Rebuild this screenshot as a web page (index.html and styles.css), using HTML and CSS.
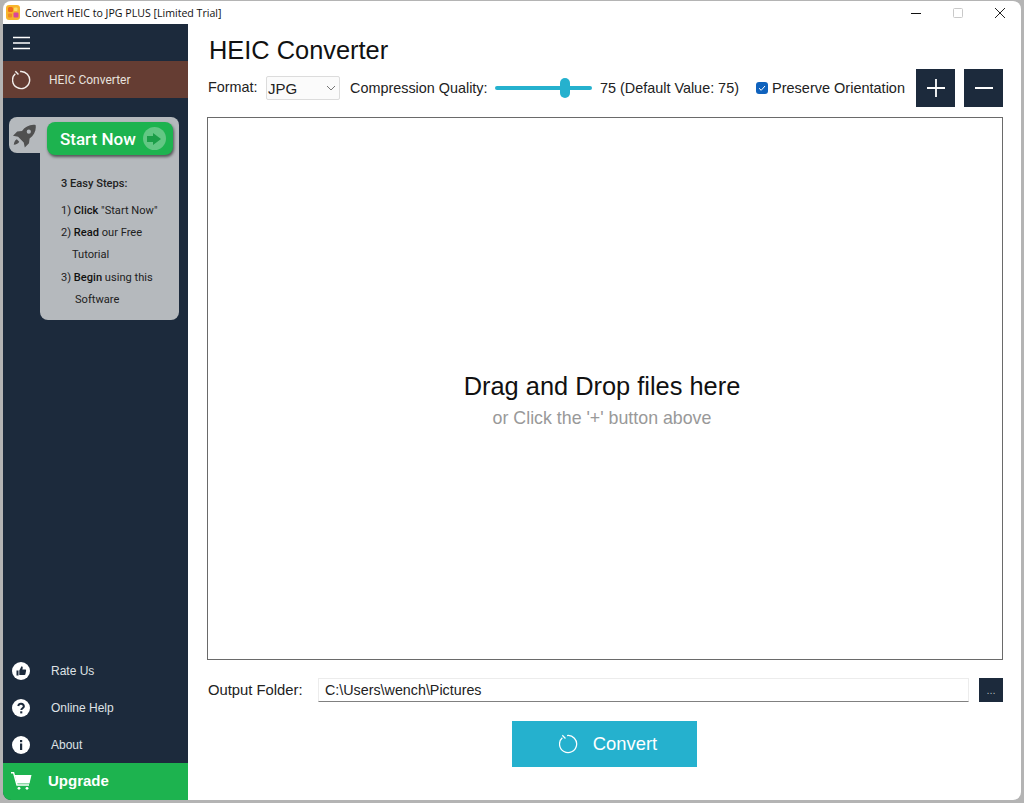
FILE: index.html
```html
<!DOCTYPE html>
<html lang="en">
<head>
    <meta charset="UTF-8">
    <title>Convert HEIC to JPG PLUS [Limited Trial]</title>
    <link rel="stylesheet" href="styles.css">
</head>
<body>
    <div class="window">
        <div class="titleBar">
            <svg class="appIcon" viewBox="0 0 14 15">
                <rect width="14" height="15" rx="3" fill="#f7b52c"/>
                <rect x="2" y="2" width="5" height="5" rx="1.500" fill="#ee6a1f"/>
                <rect x="7.500" y="7.500" width="5" height="5" rx="1" fill="#d9459c"/>
                <rect x="2" y="8.500" width="4" height="4" rx="1" fill="#f08a24"/>
                <rect x="8" y="2.500" width="3.500" height="3.500" rx="1" fill="#fbdc6a"/>
            </svg>
            <span class="titleText">Convert HEIC to JPG PLUS [Limited Trial]</span>
            <div class="windowBtns">
                <svg viewBox="0 0 42 24"><path d="M16 12.500h10" stroke="#111" fill="none"/></svg>
                <svg viewBox="0 0 42 24"><rect x="16.500" y="7.500" width="9" height="9" rx="1" stroke="#c9c9c9" fill="none"/></svg>
                <svg viewBox="0 0 42 24"><path d="M16 7l10 10M26 7L16 17" stroke="#222" fill="none"/></svg>
            </div>
        </div>
        <div class="appBody">
            <div class="sidebar">
                <div class="menuBtn">
                    <svg class="hamburger" viewBox="0 0 17 14"><path d="M0 1.500h17M0 7h17M0 12.500h17" stroke="#fff" stroke-width="1.600" fill="none"/></svg>
                </div>
                <div class="navActive">
                    <svg class="refreshIcon" viewBox="0 0 20 20"><path d="M8.500 1.100A9 9 0 1 1 3.500 3.400M3.500 .8 6.800 4.200" stroke="#f2eeea" stroke-width="1.500" fill="none"/></svg>
                    <span>HEIC Converter</span>
                </div>

                <div class="promo">
                    <div class="promoTop">
                        <svg class="rocket" viewBox="0 0 24 24"><path fill="#505050" d="M23.600.4c-6-.8-10.800 1.700-14.200 6.300l-5 .6L0 11.700l5.300 1.100 5.900 5.900 1.100 5.300 4.400-4.400.6-5C22 11.200 24.500 6.400 23.600.4zM16.500 9.700a2.200 2.200 0 1 1 0-4.400 2.200 2.200 0 0 1 0 4.400zM4 15.500c-1.800 1-2.800 2.800-3.200 5.700 2.900-.4 4.700-1.400 5.700-3.200z"/></svg>
                        <div class="startBtn">
                            <span>Start Now</span>
                            <span class="startArrow"><svg viewBox="0 0 14 12"><path d="M0 3h6V0l8 6-8 6V9H0z" fill="#1b9e48"/></svg></span>
                        </div>
                    </div>
                    <div class="promoBody">
                        <p class="stepsTitle">3 Easy Steps:</p>
                        <p>1) <b>Click</b> "Start Now"</p>
                        <p>2) <b>Read</b> our Free</p>
                        <p class="indent1">Tutorial</p>
                        <p>3) <b>Begin</b> using this</p>
                        <p class="indent2">Software</p>
                    </div>
                </div>

                <div class="sideBottom">
                    <div class="navItem">
                        <svg class="navIcon" viewBox="0 0 18 18"><circle cx="9" cy="9" r="9" fill="#fff"/><path fill="#1c2a3c" d="M4.500 8.500h2v5h-2zM7.300 8.500 9.500 4.300c1 0 1.400.8 1.200 1.700l-.3 1.500h2.800c.6 0 1 .5.900 1.100l-.7 3.600c-.1.500-.5.800-1 .8H7.300z"/></svg>
                        <span>Rate Us</span>
                    </div>
                    <div class="navItem">
                        <svg class="navIcon" viewBox="0 0 18 18"><circle cx="9" cy="9" r="9" fill="#fff"/><path d="M6.200 7a2.900 2.900 0 0 1 5.700.3c0 1.900-2.600 2-2.600 3.700" stroke="#1c2a3c" stroke-width="2" fill="none"/><rect x="8.200" y="12.300" width="2.100" height="2.100" fill="#1c2a3c"/></svg>
                        <span>Online Help</span>
                    </div>
                    <div class="navItem">
                        <svg class="navIcon" viewBox="0 0 18 18"><circle cx="9" cy="9" r="9" fill="#fff"/><rect x="8" y="4" width="2.200" height="2.200" fill="#1c2a3c"/><rect x="8" y="7.500" width="2.200" height="6.500" fill="#1c2a3c"/></svg>
                        <span>About</span>
                    </div>
                    <div class="upgrade">
                        <svg class="cartIcon" viewBox="0 0 21 18"><path d="M0 .7h2.600L6 13h12" stroke="#fff" stroke-width="1.400" fill="none"/><path fill="#fff" d="M3.700 3H20.500L18.500 11.500H6z"/><circle cx="8" cy="16.300" r="1.400" fill="#fff"/><circle cx="16" cy="16.300" r="1.400" fill="#fff"/></svg>
                        <span>Upgrade</span>
                    </div>
                </div>
            </div>

            <div class="main">
                <h1>HEIC Converter</h1>
                <div class="toolbar">
                    <span class="formatLabel">Format:</span>
                    <div class="select">
                        <span>JPG</span>
                        <svg class="chevron" viewBox="0 0 10 6"><path d="M1 1l4 4 4-4" stroke="#777" fill="none"/></svg>
                    </div>
                    <span class="qualityLabel">Compression Quality:</span>
                    <div class="slider"><div class="sliderThumb"></div></div>
                    <span class="qualityValue">75 (Default Value: 75)</span>
                    <span class="checkbox"><svg viewBox="0 0 12 12"><path d="M3 6.200 5.200 8.300 9 4" stroke="#fff" fill="none"/></svg></span>
                    <span class="checkLabel">Preserve Orientation</span>
                    <button class="squareBtn addBtn"><svg viewBox="0 0 20 20"><path d="M10 1v18M1 10h18" stroke="#fff" stroke-width="1.800" fill="none"/></svg></button>
                    <button class="squareBtn"><svg viewBox="0 0 20 20"><path d="M1 10h18" stroke="#fff" stroke-width="1.800" fill="none"/></svg></button>
                </div>

                <div class="dropZone">
                    <div class="dropTitle">Drag and Drop files here</div>
                    <div class="dropHint">or Click the '+' button above</div>
                </div>

                <div class="outputRow">
                    <span class="outputLabel">Output Folder:</span>
                    <div class="pathBox">C:\Users\wench\Pictures</div>
                    <button class="browseBtn">...</button>
                </div>

                <button class="convertBtn">
                    <svg viewBox="0 0 20 20"><path d="M8.500 1.100A9 9 0 1 1 3.500 3.400M3.500 .8 6.800 4.200" stroke="#fff" stroke-width="1.300" fill="none"/></svg>
                    <span>Convert</span>
                </button>
            </div>
        </div>
    </div>
</body>
</html>
```

FILE: styles.css
```css
* { box-sizing: border-box; }

html, body {
  margin: 0;
  height: 100%;
}

/* Background behind the window */
body {
  background: #b4b4b4;
  padding: 1px 3px 3px 3px;
  font-family: "Liberation Sans", Arial, sans-serif;
  overflow: hidden;
}

.window {
  height: 799px;
  background: #ffffff;
  border-radius: 8px;
  overflow: hidden;
  display: flex;
  flex-direction: column;
}

/* Title bar */
.titleBar {
  height: 23px;
  display: flex;
  align-items: center;
  padding-left: 3px;
}

.appIcon {
  width: 14px;
  height: 15px;
}

.titleText {
  margin-left: 5px;
  font: 10.6px "Open Sans", sans-serif;
  color: #111111;
}

.windowBtns {
  margin-left: auto;
  display: flex;
}

.windowBtns svg {
  width: 42px;
  height: 24px;
}

.appBody {
  flex: 1;
  display: flex;
  min-height: 0;
}

/* Sidebar */
.sidebar {
  width: 185px;
  background: #1c2a3c;
  display: flex;
  flex-direction: column;
}

.menuBtn {
  height: 37px;
  display: flex;
  align-items: center;
  padding-left: 10px;
}

.hamburger {
  width: 17px;
  height: 14px;
}

.navActive {
  height: 37px;
  background: #653d33;
  display: flex;
  align-items: center;
  color: #e8e2de;
  font: 12px Roboto, sans-serif;
}

.refreshIcon {
  width: 19px;
  height: 20px;
  margin-left: 9px;
  margin-right: 18px;
}

/* Start Now card */
.promo {
  margin: 19px 0 0 6px;
  width: 170px;
  color: #222222;
  font: 11.1px Roboto, sans-serif;
}

.promoTop {
  height: 36px;
  background: #b5b9bd;
  border-radius: 8px 8px 0 8px;
  display: flex;
  padding: 5px 0 0 4px;
}

.rocket {
  width: 23px;
  height: 24px;
  margin-top: 2px;
}

.startBtn {
  width: 126px;
  height: 33px;
  margin-left: 11px;
  background: #1db34f;
  border-radius: 8px;
  box-shadow: 1px 2px 3px rgba(0, 0, 0, 0.55);
  display: flex;
  align-items: center;
  padding-left: 13px;
  color: #ffffff;
  font: 500 17px Roboto, sans-serif;
  position: relative;
}

.startArrow {
  width: 23px;
  height: 23px;
  margin-left: 7px;
  border-radius: 50%;
  background: #63c784;
  display: flex;
  align-items: center;
  justify-content: center;
}

.startArrow svg {
  width: 14px;
  height: 12px;
}

.promoBody {
  margin-left: 31px;
  height: 167px;
  background: #b5b9bd;
  border-radius: 0 0 8px 8px;
  padding: 20px 0 0 21px;
}

.promoBody p {
  margin: 0;
  height: 22.2px;
  line-height: 22px;
  white-space: nowrap;
}

.promoBody .stepsTitle {
  font-weight: 500;
  height: 27px;
}

.promoBody b { font-weight: 500; color: #111111; }

.promoBody .indent1 { padding-left: 11px; }
.promoBody .indent2 { padding-left: 14px; }

.sideBottom {
  margin-top: auto;
}

.navItem {
  height: 37px;
  display: flex;
  align-items: center;
  padding-left: 9px;
  color: #dfe2e6;
  font-size: 12px;
}

.navIcon {
  width: 18px;
  height: 18px;
  margin-right: 21px;
}

.upgrade {
  height: 37px;
  background: #1db34f;
  display: flex;
  align-items: center;
  padding: 0 0 2px 8px;
  color: #ffffff;
  font-weight: 700;
  font-size: 15px;
}

.cartIcon {
  width: 21px;
  height: 18px;
  margin-right: 16px;
}

/* Main area */
.main {
  flex: 1;
  padding: 0 18px 0 19px;
  display: flex;
  flex-direction: column;
}

h1 {
  margin: 8px 0 1px 2px;
  height: 36px;
  line-height: 36px;
  font-weight: 400;
  font-size: 25.4px;
  color: #111111;
}

.toolbar {
  height: 38px;
  display: flex;
  align-items: center;
  font-size: 14.4px;
  color: #222222;
}

.formatLabel {
  margin: 0 0 2px 1px;
  width: 49px;
  white-space: nowrap;
}

.select {
  width: 74px;
  height: 24px;
  margin-left: 9px;
  background: #fbfbfb;
  border: 1px solid #dcdcdc;
  border-radius: 2px;
  display: flex;
  align-items: center;
  justify-content: space-between;
  padding: 0 3px 0 1px;
  font-size: 15px;
}

.chevron {
  width: 10px;
  height: 6px;
}

.qualityLabel {
  margin-left: 10px;
  width: 137px;
  white-space: nowrap;
}

.slider {
  width: 97px;
  height: 4px;
  margin-left: 8px;
  background: #25b1ce;
  border-radius: 2px;
  position: relative;
}

.sliderThumb {
  position: absolute;
  left: 65px;
  top: -8px;
  width: 10px;
  height: 20px;
  background: #25b1ce;
  border-radius: 5px;
}

.qualityValue {
  margin-left: 8px;
  width: 138px;
  white-space: nowrap;
}

.checkbox {
  width: 12px;
  height: 12px;
  margin-left: 18px;
  background: #0f62bd;
  border-radius: 3px;
  display: flex;
}

.checkLabel {
  margin-left: 4px;
  font-size: 14.5px;
  white-space: nowrap;
}

.squareBtn {
  width: 39px;
  height: 38px;
  margin-left: 9px;
  background: #1c2a3c;
  border: none;
  padding: 0;
  display: flex;
  align-items: center;
  justify-content: center;
}

.squareBtn svg {
  width: 20px;
  height: 20px;
}

.addBtn { margin-left: auto; }

.dropZone {
  height: 543px;
  margin-top: 10px;
  border: 1px solid #6a6a6a;
  display: flex;
  flex-direction: column;
  align-items: center;
  justify-content: center;
  padding: 24px 6px 0 0;
}

.dropTitle {
  font-size: 25.4px;
  color: #111111;
  margin-bottom: 7px;
}

.dropHint {
  font-size: 17.8px;
  color: #999999;
}

.outputRow {
  margin-top: 18px;
  height: 24px;
  display: flex;
  align-items: center;
  font-size: 14.3px;
  color: #222222;
}

.outputLabel {
  margin-left: 1px;
  width: 110px;
  font-size: 14.800px;
}

.pathBox {
  width: 651px;
  height: 24px;
  line-height: 22px;
  padding-left: 6px;
  background: #ffffff;
  border: 1px solid #ececec;
  border-bottom: 1px solid #808080;
}

.browseBtn {
  width: 24px;
  height: 24px;
  margin-left: auto;
  background: #1c2a3c;
  border: none;
  padding: 0;
  color: #aab0b8;
  font-size: 11px;
}

.convertBtn {
  width: 185px;
  height: 46px;
  margin: 19px 0 0 305px;
  background: #25b1ce;
  border: none;
  padding: 0 0 0 7px;
  display: flex;
  align-items: center;
  justify-content: center;
  color: #ffffff;
  font: 18.4px "Liberation Sans", Arial, sans-serif;
}

.convertBtn svg {
  width: 19px;
  height: 20px;
  margin-right: 15px;
}
```
